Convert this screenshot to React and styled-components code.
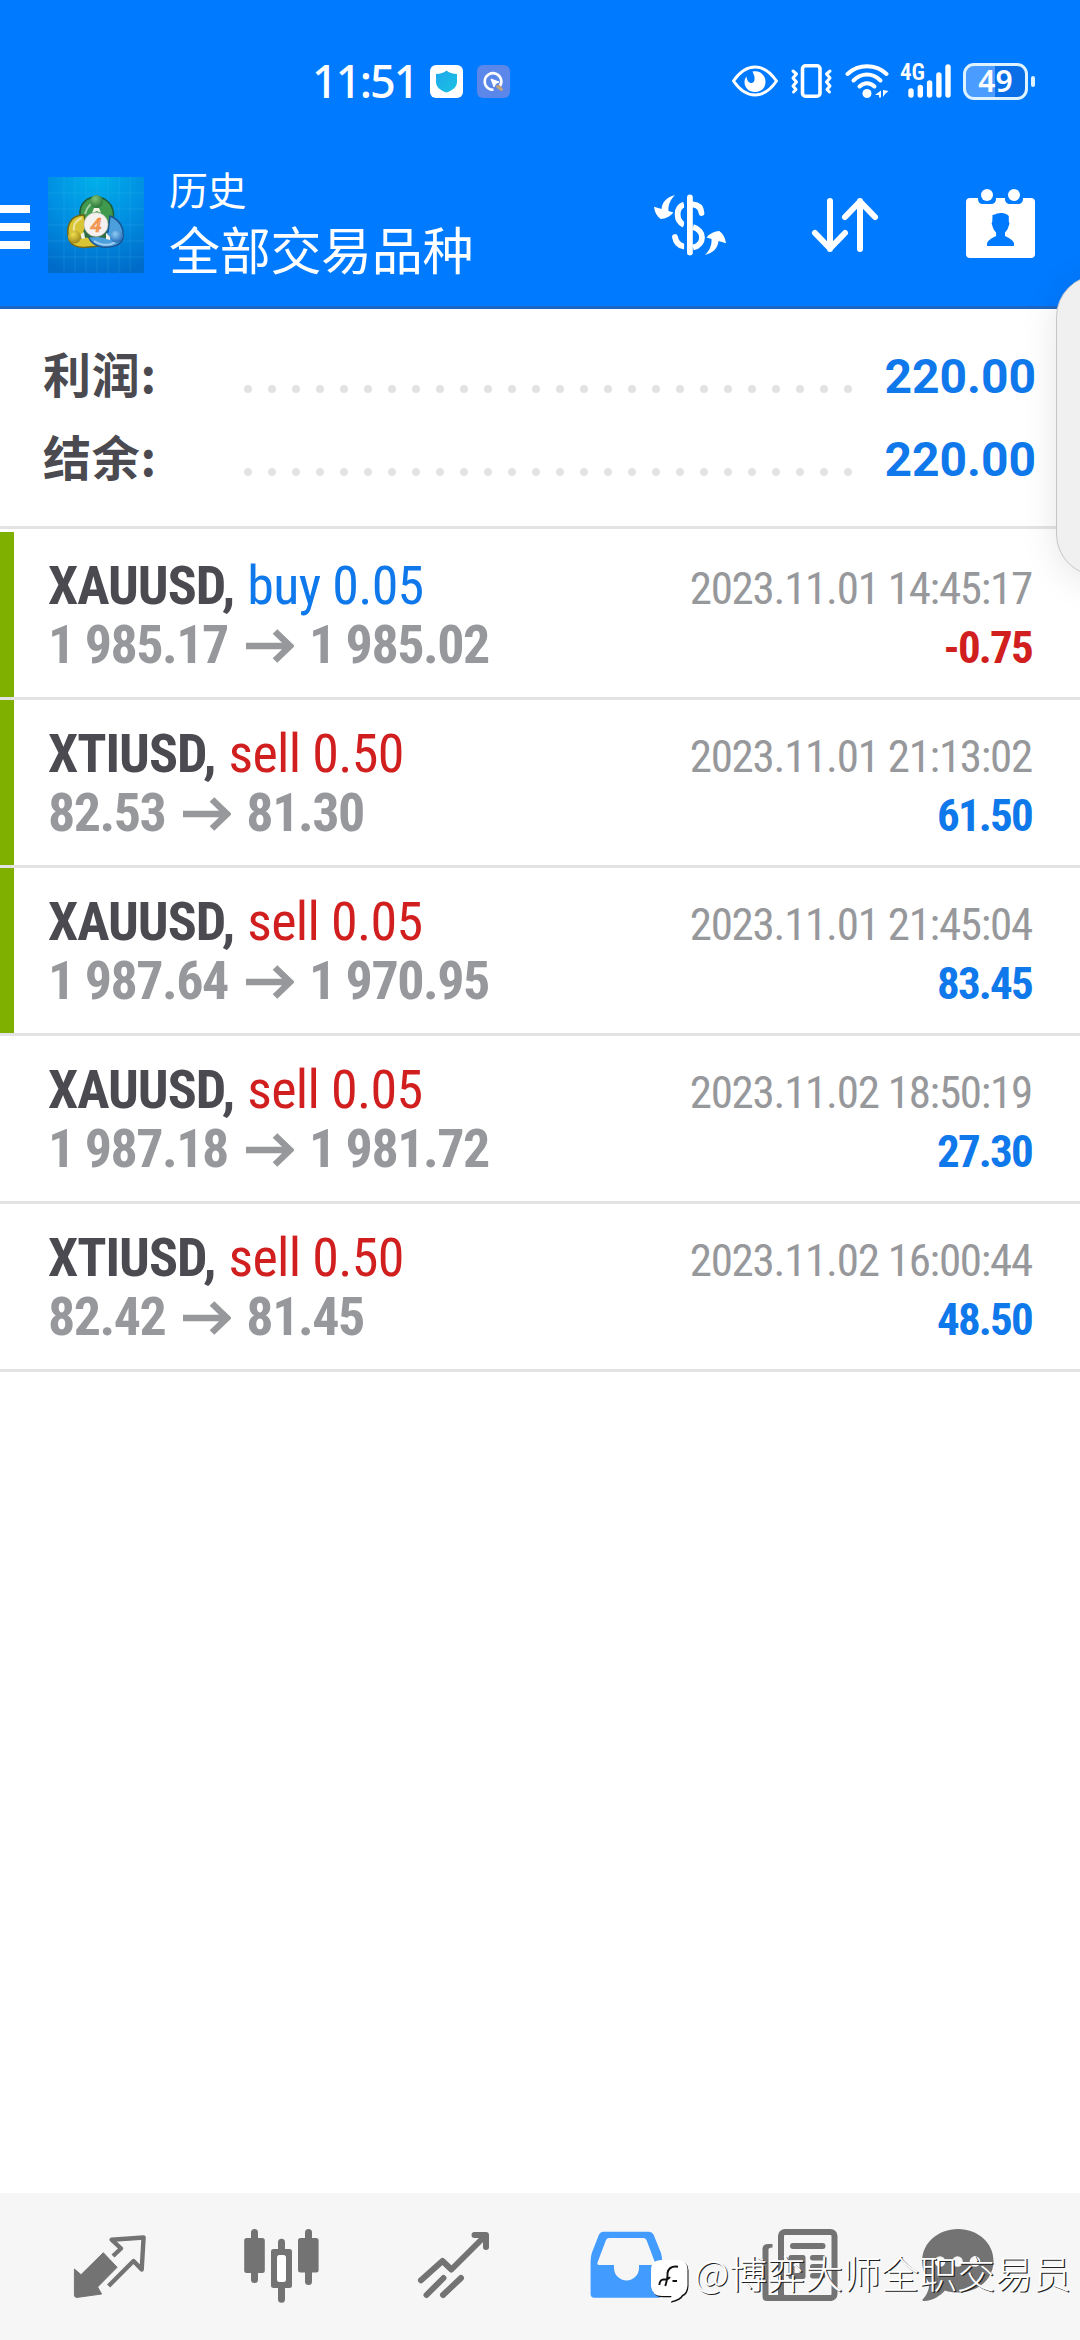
import styled, { createGlobalStyle } from "styled-components";

const BLUE = "#007aff";
const RED = "#d11f1f";
const GRAY = "#737373";

const deals = [
  { symbol: "XAUUSD", side: "buy", volume: "0.05", open: "1 985.17", close: "1 985.02", time: "2023.11.01 14:45:17", profit: "-0.75", marked: true },
  { symbol: "XTIUSD", side: "sell", volume: "0.50", open: "82.53", close: "81.30", time: "2023.11.01 21:13:02", profit: "61.50", marked: true },
  { symbol: "XAUUSD", side: "sell", volume: "0.05", open: "1 987.64", close: "1 970.95", time: "2023.11.01 21:45:04", profit: "83.45", marked: true },
  { symbol: "XAUUSD", side: "sell", volume: "0.05", open: "1 987.18", close: "1 981.72", time: "2023.11.02 18:50:19", profit: "27.30" },
  { symbol: "XTIUSD", side: "sell", volume: "0.50", open: "82.42", close: "81.45", time: "2023.11.02 16:00:44", profit: "48.50" },
];

const StatusBar = () => (
  <Status>
    <Clock>11:51</Clock>
    <svg width="33" height="33" viewBox="0 0 33 33">
      <defs>
        <linearGradient id="shield" x1="0" y1="0" x2="1" y2="1">
          <stop offset="0" stopColor="#1fa6ee" />
          <stop offset="1" stopColor="#19c3e0" />
        </linearGradient>
      </defs>
      <rect width="33" height="33" rx="6" fill="#fff" />
      <path d="M16.5 5.5C19 8 22.500 8.700 27 9v8c0 5-4.500 8.500-10.500 10.500C10.500 25.500 6 22 6 17V9c4.500-.3 8-1 10.500-3.500z" fill="url(#shield)" />
    </svg>
    <svg width="33" height="33" viewBox="0 0 33 33">
      <rect width="33" height="33" rx="6" fill="#5b86ea" />
      <path d="M23 21A8.300 8.300 0 1 0 16.500 24.800" fill="none" stroke="#fff" strokeWidth="2.600" />
      <path d="M14 14l8 3-3.300 1.600L17 22z" fill="#fff" stroke="#fff" strokeLinejoin="round" />
      <path d="M19 20.500l3.500-.500 3.500 4-.500 2-2.500-.500-3.500-3z" fill="#c3a57d" />
    </svg>
    <StatusRight>
      <svg width="46" height="32" viewBox="0 0 46 32">
        <path d="M1.500 16C8 6.500 15 2 23 2s15 4.500 21.500 14C38 25.500 31 30 23 30S8 25.500 1.500 16z" fill="none" stroke="#fff" strokeWidth="3" strokeLinejoin="round" />
        <path d="M20.500 6.500C28 5 33.500 10 33.500 17c0 6-4.500 10-10.500 10S12.500 23 12.500 17c0-2 .8-4 2-5.500C15 16 17 18 19.500 18s5-3.500 1-11.500z" fill="#fff" />
      </svg>
      <svg width="43" height="34" viewBox="0 0 43 34">
        <rect x="12.500" y="1.800" width="17.500" height="30.400" rx="3" fill="none" stroke="#fff" strokeWidth="3.600" />
        <g fill="none" stroke="#fff" strokeWidth="3" strokeLinejoin="round" strokeLinecap="round">
          <path d="M3 7l3.500 3-3.500 4 3.500 4-3.500 4 3 3.500-2.500 2.500" />
          <path d="M40 7l-3.500 3 3.500 4-3.500 4 3.500 4-3 3.500 2.500 2.500" />
        </g>
      </svg>
      <svg width="44" height="34" viewBox="0 0 44 34">
        <g fill="none" stroke="#fff" strokeWidth="4" strokeLinecap="round">
          <path d="M2.500 10C13.500-.2 30.500-.2 41.500 10" />
          <path d="M8.500 16.500C16.500 8.500 27.500 8.500 35.500 16.500" />
          <path d="M14.500 22.500C19 18 25 18 29.500 22.500" />
        </g>
        <circle cx="22" cy="29.500" r="4.500" fill="#fff" />
        <path d="M36 26.500v7h-2v-2.500h-4zM38 26v7l2-3 3.500-3z" fill="#fff" />
      </svg>
      <Signal>
        <NetType>4G</NetType>
        <svg width="44" height="34" viewBox="0 0 44 34" stroke="#fff" strokeWidth="5.400" strokeLinecap="round">
          <path d="M4 27v4M13.300 23.500v7.500M22.600 19v12M31.900 11v20M41 3v28" />
        </svg>
      </Signal>
      <Battery>
        <span>49</span>
      </Battery>
    </StatusRight>
  </Status>
);

const Logo = () => (
  <svg width="96" height="96" viewBox="0 0 96 96">
    <defs>
      <radialGradient id="bg" cx=".5" cy="0" r="1.050">
        <stop offset="0" stopColor="#00b0ea" />
        <stop offset=".5" stopColor="#008fe2" />
        <stop offset="1" stopColor="#006bc8" />
      </radialGradient>
      <radialGradient id="gr" cx=".4" cy=".3" r=".8">
        <stop offset="0" stopColor="#7fc275" />
        <stop offset="1" stopColor="#1d6b30" />
      </radialGradient>
      <radialGradient id="ye" cx=".4" cy=".3" r=".8">
        <stop offset="0" stopColor="#f0df4e" />
        <stop offset="1" stopColor="#94790f" />
      </radialGradient>
      <radialGradient id="bl" cx=".4" cy=".3" r=".8">
        <stop offset="0" stopColor="#8dcbf5" />
        <stop offset="1" stopColor="#175fae" />
      </radialGradient>
    </defs>
    <rect width="96" height="96" fill="url(#bg)" />
    <path d="M0 16H96M0 32H96M0 48H96M0 64H96M0 80H96M16 0V96M27 0V96M38 0V96M49 0V96M60 0V96M71 0V96M82 0V96" stroke="#4cc4f5" strokeOpacity=".2" />
    <g strokeLinejoin="round">
      <path d="M32 38C31 27 39 20 48 20s18 7 17.500 19c0 5-1 9-3.500 12L34 50c-1.500-4-2-8-2-12z" fill="#3f9a4d" stroke="#1e5b38" strokeWidth="1.500" />
      <path d="M36 38C20 38 18 52 21 63c4 8 13 8 20 7l12-1-14-14z" fill="#d9c534" stroke="#6f6715" strokeWidth="1.500" />
      <path d="M62 39c10 4 14 12 13 22-2 8-12 10-21 9-7-1-12-6-14-11l20-4z" fill="#4b9fdd" stroke="#1b5391" strokeWidth="1.500" />
      <path d="M37 37c2-8 7-12 12-12M26 55c-1-7 2-12 8-14M46 64c8 5 16 5 23 0" fill="none" stroke="#fff" strokeOpacity=".5" strokeWidth="2" />
      <path d="M38 44l8-7h5l9 8-2 14 4 3-12-2-16 1-5 3 6-8z" fill="#2f6d47" />
      <path d="M46 31l-2 5 5-2 4 2-2-5zM32 58l4-3 1 6-3 1zM62 60l-4-4v6l4 1z" fill="#f4f4e6" />
    </g>
    <circle cx="48.500" cy="24.500" r="6.500" fill="url(#gr)" />
    <circle cx="26.500" cy="60" r="6.500" fill="url(#ye)" />
    <circle cx="68.500" cy="59.500" r="6.200" fill="url(#bl)" />
    <circle cx="48" cy="47.500" r="12" fill="#f5f1f0" stroke="#b8b9a8" strokeWidth=".6" />
    <text x="48" y="54.800" textAnchor="middle" fill="#f6a563" stroke="#ef8a3f" strokeWidth=".7" fontFamily="Roboto" fontWeight="500" fontStyle="italic" fontSize="20">4</text>
  </svg>
);

const CurrencyIcon = () => (
  <svg width="80" height="80" viewBox="0 0 80 80">
    <g fill="none" stroke="#fff" strokeWidth="5.800" strokeLinecap="round">
      <path d="M39.900 12.500v55" />
      <path d="M43 19.500C48 19.800 51 22.500 51.500 28" />
      <path d="M43 42c12 3.500 12 17.500 0 20.500" strokeLinecap="butt" />
      <path d="M34 19.500C25.500 22.500 25.500 35.500 34 40" strokeLinecap="butt" />
      <path d="M25 52c.8 5.500 4 8.500 9 9.500" />
    </g>
    <path d="M35.500 10v60" stroke={BLUE} strokeWidth="2.800" />
    <path d="M25 10C17 12 12 17 11.500 24L4 21.700Q5 30 10.700 34Q18 34 23.500 27.500L18.500 26C18 19 21 14 25 10z" fill="#fff" />
    <path d="M55 70C63 68 68 63 68.500 56L76 58.300Q75 50 69.300 46Q62 46 56.500 52.500L61.500 54C62 61 59 66 55 70z" fill="#fff" />
  </svg>
);

const SortIcon = () => (
  <svg width="80" height="80" viewBox="0 0 80 80" fill="none" stroke="#fff" strokeWidth="6" strokeLinecap="round" strokeLinejoin="round">
    <path d="M25 16v48M10 48l15 15.500L40 48" />
    <path d="M55 64V16M40 32l15-15.500L70 32" />
  </svg>
);

const CalendarIcon = () => (
  <svg width="80" height="80" viewBox="0 0 80 80">
    <path fill="#fff" fillRule="evenodd" d="M10 13h8v1c0 3 2 5 5 5h8c3 0 5-2 5-5v-1h9v1c0 3 2 5 5 5h8c3 0 5-2 5-5v-1h8q4 0 4 4v52q0 4-4 4H10q-4 0-4-4V17q0-4 4-4zM27 61h27v-3c-1-3-5-5-9-7v-3.500c2-2 3-4 3.500-6l1-3-.7-2V31c-3-3-6-3-8-3-3 0-5 1-6 1.500L32.500 30l-.2 6.500-.7 2 1 3c.5 2 1.500 4 3.500 6V51c-4 2-8 4-9 7z" />
    <circle cx="27" cy="10" r="6" fill="#fff" />
    <circle cx="54" cy="10" r="6" fill="#fff" />
  </svg>
);

const DealArrow = () => (
  <ArrowSvg width="48" height="36" viewBox="0 0 48 36" fill="none" stroke="#97989b" strokeWidth="6.600">
    <path d="M0 18H44M29 3.500L44 18L29 32.500" />
  </ArrowSvg>
);

const Deal = ({ deal }) => (
  <DealRow>
    <Mark $on={deal.marked} />
    <DealBody>
      <Line>
        <Symbol>{deal.symbol},</Symbol>
        <Side $buy={deal.side === "buy"}>{deal.side} {deal.volume}</Side>
        <Time>{deal.time}</Time>
      </Line>
      <Line>
        <Price>{deal.open}</Price>
        <DealArrow />
        <Price>{deal.close}</Price>
        <Profit $loss={deal.profit.startsWith("-")}>{deal.profit}</Profit>
      </Line>
    </DealBody>
  </DealRow>
);

const TabBar = () => (
  <Tabs>
    <TabIcon>
      <path d="M4.400 43L11 48.700L33.300 26.700L47.100 41.300L27.600 61L31.600 68L6.500 71.500Q4.400 71 4.400 69z" fill={GRAY} stroke={GRAY} strokeLinejoin="round" />
      <path d="M43 30L51 22.500L41.600 13.700L73.600 11.500L71.700 43.500L63.500 35L38.600 60" fill="none" stroke={GRAY} strokeWidth="4.400" strokeLinejoin="round" />
    </TabIcon>
    <TabIcon>
      <g fill={GRAY}>
        <rect x="2.200" y="12" width="20.600" height="35" rx="2.500" />
        <rect x="9" y="3" width="7" height="54" rx="3.500" />
        <rect x="29" y="23" width="21" height="39" rx="2.500" />
        <rect x="36" y="12.700" width="7" height="64" rx="3.500" />
        <rect x="56" y="12" width="20.600" height="34.500" rx="2.500" />
        <rect x="63" y="3" width="7" height="56" rx="3.500" />
      </g>
      <rect x="35" y="29" width="9" height="27" rx="2.500" fill="#fff" />
    </TabIcon>
    <TabIcon fill="none" stroke={GRAY} strokeWidth="6" strokeLinecap="round" strokeLinejoin="round">
      <path d="M7 54.300L28.500 35L37.400 43.500L71 10M60.500 9H72V21" />
      <path d="M12.500 69L29.500 52M29 69L47 52" />
    </TabIcon>
    <TabIcon>
      <path fill="#429bff" fillRule="evenodd" d="M17 5.700H63Q66 5.700 67.500 8.500L75 27Q76.200 31 76.200 36V68Q76.200 71.700 72.500 71.700H8.300Q4.600 71.700 4.600 68V36Q4.600 31 5.800 27L13 8.500Q14.500 5.700 17 5.700zM23 12Q21 12 20 14L11.500 36.500Q10.800 39 13.500 39H28V42A12.500 12.500 0 0 0 53 42V39H67Q69.700 39 69 36.500L60.500 14Q59.500 12 57.500 12z" />
    </TabIcon>
    <TabIcon>
      <rect x="23" y="6" width="53.500" height="66" rx="4" fill="none" stroke={GRAY} strokeWidth="6" />
      <path d="M14.500 18v3.500q-4 0-4 2V69H74v6H9q-4.500 0-4.500-4.500V23q0-5 6-5z" fill={GRAY} />
      <g fill={GRAY}>
        <rect x="32" y="17" width="35.500" height="6" rx="3" />
        <path fillRule="evenodd" d="M33 29h12q2.500 0 2.500 2.500v19q0 2.500-2.500 2.500H33q-2.500 0-2.500-2.500v-19Q30.500 29 33 29zM36.500 35v12h5V35z" />
        <rect x="52" y="29" width="15.500" height="5.500" rx="2.700" />
        <rect x="52" y="38" width="15.500" height="5.500" rx="2.700" />
        <rect x="52" y="47" width="15.500" height="5.500" rx="2.700" />
      </g>
    </TabIcon>
    <ChatTab>
      <path d="M40 3C60 3 75.500 17 75.500 35S60 66.500 40 66.500C35 66.500 31 66 27 64.500C22 70 15 74.500 6 75C4.500 75 4 74 5 73C9 69 11 64 11.500 57C7 51 4.200 44 4.200 35C4.200 17 20 3 40 3z" fill={GRAY} />
      <circle cx="22" cy="35.500" r="5.300" fill="#f6f6f6" />
      <circle cx="39.500" cy="35.500" r="5.300" fill="#f6f6f6" />
      <circle cx="57" cy="35.500" r="5.300" fill="#f6f6f6" />
    </ChatTab>
    <Watermark>
      <svg width="40" height="46" viewBox="0 0 40 46">
        <path d="M11 1H28Q37 1 37.500 10V26Q37 34 32 36Q30 40 20 42.500L21.500 37H12Q2 37 1 27V11Q1 1 11 1z" fill="#111" transform="translate(1 1.300)" />
        <path d="M11 1H28Q37 1 37.500 10V26Q37 34 32 36Q30 40 20 42.500L21.500 37H12Q2 37 1 27V11Q1 1 11 1z" fill="#fff" />
        <path d="M28 7.700Q19 6.500 17.500 14Q18 18 15.300 27M9.300 26Q10 20 14 20.500T20 18M22.500 22H27" fill="none" stroke="#111" strokeWidth="1.900" />
      </svg>
      <span>@博弈大师全职交易员</span>
    </Watermark>
  </Tabs>
);

const App = () => {
  return (
    <Screen>
      <GlobalStyle />
      <Header>
        <StatusBar />
        <Toolbar>
          <Menu>
            <i />
            <i />
            <i />
          </Menu>
          <Logo />
          <Titles>
            <Title>历史</Title>
            <Subtitle>全部交易品种</Subtitle>
          </Titles>
          <Actions>
            <CurrencyIcon />
            <SortIcon />
            <CalendarIcon />
          </Actions>
        </Toolbar>
      </Header>
      <Summary>
        <SummaryRow>
          <Label>利润:</Label>
          <Dots />
          <Total>220.00</Total>
        </SummaryRow>
        <SummaryRow>
          <Label>结余:</Label>
          <Dots />
          <Total>220.00</Total>
        </SummaryRow>
      </Summary>
      <List>
        {deals.map((deal) => (
          <Deal key={deal.time} deal={deal} />
        ))}
      </List>
      <TabBar />
      <EdgePanel />
    </Screen>
  );
};

const GlobalStyle = createGlobalStyle`
  body {
    margin: 0;
    background: #fff;
  }
  * {
    box-sizing: border-box;
  }
  svg {
    display: block;
    flex-shrink: 0;
  }
`;

const Screen = styled.div`
  position: relative;
  display: flex;
  flex-direction: column;
  width: 1080px;
  height: 2340px;
  overflow: hidden;
  background: #fff;
  font-family: Roboto, "Noto Sans CJK SC", sans-serif;
`;

const Header = styled.header`
  height: 309px;
  background: ${BLUE};
  border-bottom: 3px solid #1a68c4;
  color: #fff;
`;

const Status = styled.div`
  display: flex;
  align-items: center;
  height: 144px;
  padding: 18px 52px 0 312px;
  gap: 14px;
`;

const Clock = styled.div`
  width: 104px;
  font-family: "Noto Sans", sans-serif;
  font-size: 45px;
  font-weight: 500;
  line-height: 60px;
  letter-spacing: -1.9px;
`;

const StatusRight = styled.div`
  display: flex;
  align-items: center;
  gap: 12px;
  margin-left: auto;
`;

const Signal = styled.div`
  position: relative;
  padding-left: 6px;
`;

const NetType = styled.span`
  position: absolute;
  left: -1px;
  top: -3px;
  font-family: "Roboto Condensed", sans-serif;
  font-size: 23px;
  font-weight: 600;
  line-height: 24px;
`;

const Battery = styled.div`
  position: relative;
  display: flex;
  align-items: center;
  justify-content: center;
  width: 65px;
  height: 37px;
  border: 3px solid #dff2ff;
  border-radius: 11px;
  background: linear-gradient(90deg, #4a9cff 50%, #0a6fe6 50%);
  font-family: "Noto Sans", sans-serif;
  font-size: 30px;
  font-weight: 600;
  line-height: 30px;

  &::after {
    content: "";
    position: absolute;
    right: -10px;
    width: 4px;
    height: 11px;
    border-radius: 2px;
    background: #dff2ff;
  }
`;

const Toolbar = styled.div`
  display: flex;
  align-items: center;
  height: 162px;
  padding-right: 40px;
`;

const Menu = styled.div`
  display: flex;
  flex-direction: column;
  gap: 10px;
  width: 30px;
  margin: 4px 18px 0 0;

  i {
    height: 8px;
    background: #fff;
  }
`;

const Titles = styled.div`
  margin-left: 25px;
  padding-bottom: 10px;
  font-family: "Noto Sans CJK SC", sans-serif;
`;

const Title = styled.div`
  font-size: 39px;
  line-height: 56px;
  letter-spacing: -0.5px;
`;

const Subtitle = styled.div`
  font-size: 51px;
  line-height: 64px;
  letter-spacing: -0.3px;
`;

const Actions = styled.div`
  display: flex;
  gap: 75px;
  margin-left: auto;
`;

const Summary = styled.section`
  height: 220px;
  padding: 26px 44px 0 43px;
  border-bottom: 3px solid #e3e3e5;
`;

const SummaryRow = styled.div`
  display: flex;
  align-items: center;
  height: 83px;
`;

const Label = styled.div`
  width: 193px;
  padding-bottom: 8px;
  color: #4a4a50;
  font-family: "Noto Sans CJK SC", sans-serif;
  font-size: 48px;
  font-weight: 700;
  line-height: 75px;
  letter-spacing: 0.8px;
`;

// one dot for every 24px
const Dots = styled.div`
  width: 624px;
  height: 24px;
  margin-top: 24px;
  background: radial-gradient(circle at center, #e2e2e4 3.600px, transparent 4.400px) 0 0 / 24px 24px;
`;

const Total = styled.div`
  margin-left: auto;
  color: #0f78ea;
  font-size: 48px;
  font-weight: 700;
  line-height: 83px;
`;

const List = styled.main`
  flex: 1;
  padding-top: 3px;
`;

const DealRow = styled.div`
  display: flex;
  height: 168px;
  border-bottom: 3px solid #e3e3e5;
`;

const Mark = styled.div`
  width: 14px;
  background: ${(p) => (p.$on ? "#7fb000" : "transparent")};
`;

const DealBody = styled.div`
  flex: 1;
  padding: 24px 48px 0 34px;
  font-family: "Roboto Condensed", Roboto, sans-serif;
`;

const Line = styled.div`
  display: flex;
  align-items: baseline;
  height: 59px;
  line-height: 59px;
  white-space: pre;
`;

const Symbol = styled.span`
  color: #4a4a50;
  font-size: 54px;
  font-weight: 700;
  font-kerning: normal;
  letter-spacing: -1px;
`;

const Side = styled.span`
  margin-left: 13px;
  color: ${(p) => (p.$buy ? "#0f78ea" : RED)};
  font-size: 54px;
  letter-spacing: -0.7px;
`;

const Time = styled.span`
  margin-left: auto;
  color: #97989b;
  font-size: 45px;
  letter-spacing: -1.25px;
`;

const Price = styled.span`
  color: #97989b;
  font-size: 54px;
  font-weight: 700;
  letter-spacing: -1.5px;
`;

const ArrowSvg = styled.svg`
  align-self: center;
  margin: 3px 15px 0 18px;
`;

const Profit = styled.span`
  margin-left: auto;
  color: ${(p) => (p.$loss ? RED : "#0f78ea")};
  font-size: 45px;
  font-weight: 700;
  letter-spacing: -1.8px;
`;

const Tabs = styled.nav`
  position: relative;
  display: flex;
  gap: 92px;
  height: 147px;
  padding: 33px 0 0 70px;
  background: #f6f6f6;
`;

const TabIcon = styled.svg.attrs({ viewBox: "0 0 80 80" })`
  width: 80px;
  height: 80px;
`;

const ChatTab = styled(TabIcon)`
  margin-left: -12px;
`;

const Watermark = styled.div`
  position: absolute;
  right: 9px;
  bottom: 35px;
  display: flex;
  align-items: flex-end;
  gap: 4px;
  color: #fff;
  font-family: "Noto Sans CJK SC", sans-serif;
  font-size: 38px;
  font-weight: 300;
  line-height: 56px;
  text-shadow: 1.200px 1.200px 0 #222;

  span {
    padding-bottom: 5px;
  }
`;

const EdgePanel = styled.aside`
  position: absolute;
  top: 275px;
  right: -60px;
  width: 84px;
  height: 301px;
  border: 1px solid #c6c6c8;
  border-radius: 46px;
  background: #f0f0f0;
  box-shadow: 0 6px 36px rgba(0, 0, 0, 0.1);
`;

export default App;
